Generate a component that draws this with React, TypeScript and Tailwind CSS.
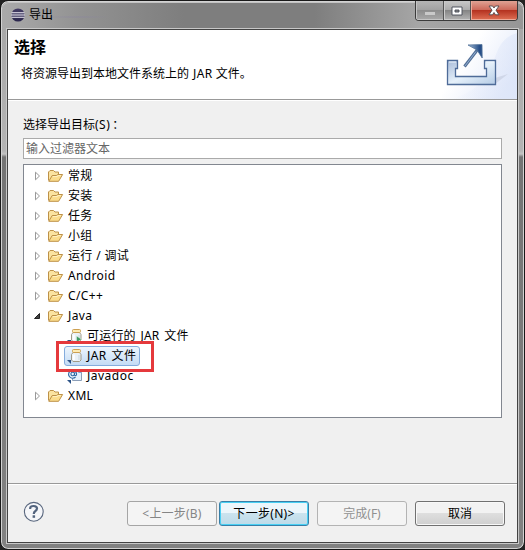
import React from 'react';

function FolderIcon() {
  return (
    <svg className="block shrink-0" width="16" height="14" viewBox="0 0 16 14">
      <path d="M.5 11.5V3L2 1.5H5.5L7 3H10.5V6" fill="#fbe3a0" stroke="#bd9148" />
      <path d="M.8 12.3L4.2 6.5H8.4L9.8 5.5H14.6L10.6 12.3Z" fill="#fbdc8c" stroke="#bd9148" strokeLinejoin="round" />
      <path d="M4.8 7.6H9L10.2 6.6H12.8" fill="none" stroke="#fff1c4" />
    </svg>
  );
}

function JarIcon({ runnable = false }: { runnable?: boolean }) {
  return (
    <svg className="block shrink-0" width="17" height="16" viewBox="0 0 17 16">
      <path d="M6 4.5L4.5 6.5V12L6 13.5H12.5L14 12V6.5L12.5 4.5Z" fill="#eaf1f7" stroke="#a19b87" />
      <path d="M6.8 6.5V12" stroke="#fff" strokeWidth="2" />
      <path d="M12 7V12" stroke="#c9d5df" />
      <rect x="5.5" y="1.5" width="8" height="3" rx="1" fill="#fdebb5" stroke="#cda052" />
      {runnable && <path d="M9.5 8L14.5 11.2L9.5 14.5Z" fill="#3f9a62" stroke="#e3f3e8" strokeWidth=".5" />}
      <path d="M0 12H4V16Z" fill="#2c5387" />
    </svg>
  );
}

function JavadocIcon() {
  return (
    <svg className="block shrink-0" width="17" height="16" viewBox="0 0 17 16">
      <path d="M5.5 1.5H11.5L14.5 4.5V12.5H5.5Z" fill="#e3f0fb" stroke="#8b9eb8" />
      <path d="M11.5 1.5V4.5H14.5" fill="none" stroke="#80a3cd" />
      <circle cx="5.5" cy="6" r="4.6" fill="#eef5fc" />
      <path d="M8.5 9A4 4 0 1 1 9.6 6.2C9.4 8.1 7.4 8.1 7.5 6.5L7.8 4.4M7.5 6A1.8 1.8 0 1 1 7.5 5.8" fill="none" stroke="#2e68a3" strokeWidth="1.1" />
      <path d="M0 12H4V16Z" fill="#2c5387" />
    </svg>
  );
}

function EclipseIcon() {
  return (
    <svg className="mt-px block" width="14" height="14" viewBox="0 0 14 14">
      <defs>
        <linearGradient id="orb" x2="0" y2="1">
          <stop stopColor="#443d65" />
          <stop offset="1" stopColor="#29254c" />
        </linearGradient>
      </defs>
      <circle cx="7" cy="7" r="6.6" fill="url(#orb)" />
      <path d="M.6 4.7H13.4M0 7H14M.6 9.3H13.4" stroke="#f3f1fa" strokeWidth="1.1" />
    </svg>
  );
}

function ExportBanner() {
  return (
    <svg className="block" width="75" height="69" viewBox="0 0 75 69">
      <defs>
        <linearGradient id="sky" x1="0" y1="0" x2="1" y2=".6">
          <stop offset=".4" stopColor="#fff" />
          <stop offset="1" stopColor="#e3eafa" />
        </linearGradient>
        <linearGradient id="tray" x1="0" y1="0" x2="1" y2="1">
          <stop stopColor="#a9bcd9" />
          <stop offset=".5" stopColor="#e5f0fa" />
          <stop offset="1" stopColor="#b4cbe5" />
        </linearGradient>
        <linearGradient id="head" x2="1">
          <stop stopColor="#a5bedb" />
          <stop offset=".8" stopColor="#274f88" />
        </linearGradient>
        <linearGradient id="sweep" x1="0" x2="1">
          <stop stopColor="#dfe7fa" stopOpacity="0" />
          <stop offset="1" stopColor="#d7e1f7" />
        </linearGradient>
      </defs>
      <rect width="75" height="69" fill="url(#sky)" />
      <path d="M10 69C35 61 46 48 52 30S63 7 75 3V69Z" fill="url(#sweep)" opacity=".5" />
      <g transform="translate(-1 0)">
        <path d="M54 48L67 44L54 54Z" fill="#c3c9dc" opacity=".6" />
        <path d="M6.5 30.5H16.5V38.5H14.5V46.5H45.5V38.5H43.5V30.5H54.5V54.5H6.5Z" fill="url(#tray)" stroke="#4e6b98" strokeWidth="1.3" />
        <path d="M8 32H15M45 32H53" stroke="#edf5fd" />
        <path d="M23.5 36.5L37 19" stroke="#526e96" strokeWidth="3" />
        <path d="M24 36L35 21.5" stroke="#91afd0" strokeWidth="1" />
        <path d="M27 15L41 14.5L41.2 28L36 20Z" fill="url(#head)" stroke="#547399" strokeWidth=".8" />
      </g>
    </svg>
  );
}

function Arrow({ open = false }: { open?: boolean }) {
  return (
    <svg className="block shrink-0" width="9" height="10" viewBox="0 0 9 10">
      {open
        ? <path d="M6.5 2.5V7.5H1.5Z" fill="#444" stroke="#222" />
        : <path d="M2.5 1.2V8.8L6.5 5Z" fill="#fff" stroke="#999" />}
    </svg>
  );
}

function Folder({ name, open = false }: { name: string; open?: boolean }) {
  return (
    <div className="flex h-5 items-center pl-[9px]">
      <Arrow open={open} />
      <span className="ml-[6px]"><FolderIcon /></span>
      <span className="ml-1 whitespace-pre tracking-[0.35px]">{name}</span>
    </div>
  );
}

function WindowControls() {
  return (
    <div className="flex h-[20px] w-[103px] overflow-hidden rounded-b-[4px] border border-t-0 border-[#3b3b3b]">
      <div className="flex w-[28px] items-center justify-center border-r border-[#555] bg-[linear-gradient(to_bottom,#b5b5b5,#a0a0a0_50%,#8d8d8d_50%,#a9a9a9)] shadow-[inset_1px_-1px_#c5c5c5]">
        <span className="mt-[5px] h-[3px] w-[10px] bg-[#c9c9c9]" />
      </div>
      <div className="flex w-[27px] items-center justify-center border-r border-[#555] bg-[linear-gradient(to_bottom,#c8c8c8,#aaa_50%,#858585_50%,#b4b4b4)] shadow-[inset_1px_-1px_#ccc]">
        <svg width="12" height="10" viewBox="0 0 12 10">
          <path d="M1 1H11V9H1Z M4 4V6H8V4Z" fill="#fff" fillRule="evenodd" stroke="#454a55" strokeWidth=".9" />
        </svg>
      </div>
      <div className="flex flex-1 items-center justify-center bg-[linear-gradient(to_bottom,#dfa294,#cb6555_50%,#b53321_50%,#df7055)] shadow-[inset_1px_-1px_#eeaa99]">
        <svg width="12" height="11" viewBox="0 0 12 11">
          <path d="M1 1H4.6L6 3L7.4 1H11L8 5.2L11 9.8H7.5L6 7.5L4.5 9.8H1L4 5.2Z" fill="#fff" stroke="#51494d" strokeWidth=".9" />
        </svg>
      </div>
    </div>
  );
}

const buttonBase = 'flex h-[25px] w-[90px] items-center justify-center rounded-[3px] border';

export default function App() {
  return (
    <div className="h-[550px] w-[525px] overflow-hidden bg-[#222] font-['Noto_Sans','Noto_Sans_CJK_SC',sans-serif] text-[12px] leading-[20px] text-black">
      <div className="flex h-[550px] w-[525px] flex-col rounded-[8px] border border-[#191919] bg-[linear-gradient(to_bottom,#a5a5a5_0,#b4b4b4_150px,#c4c4c4_153px,#747474_156px,#828282_100%)] pb-[6px] shadow-[inset_0_0_0_1px_#d2d2d2]">
        <header className="mx-px mt-px flex h-[27px] shrink-0 justify-between rounded-t-[7px] bg-[radial-gradient(ellipse_at_75px_15px,#8983a080,transparent_35px),linear-gradient(to_right,#aaa,#929292_15%,#7e7e7e_35%,#7e7e7e_60%,#a6a6a6_80%,#969696)] shadow-[inset_0_1px_#c4c4c4]">
          <div className="flex pl-[9px] pt-[5px]">
            <EclipseIcon />
            <span className="-mt-[2px] ml-[4px]">导出</span>
          </div>
          <div className="-mt-px mr-[5px]"><WindowControls /></div>
        </header>

        <main className="mx-[6px] flex min-h-0 flex-1 flex-col border border-[#444] bg-[#f0f0f0] shadow-[0_0_0_1px_#c8c8c8]">
          <section className="flex h-[70px] shrink-0 justify-between border-b border-[#999] bg-white">
            <div className="pl-[6px] pt-[7px]">
              <h1 className="text-[16px] font-bold leading-5">选择</h1>
              <p className="ml-[7px] mt-[7px]">将资源导出到本地文件系统上的<span className="ml-1 mr-[3px] tracking-[0.4px]">JAR</span>文件。</p>
            </div>
            <ExportBanner />
          </section>

          <section className="flex min-h-0 flex-1 flex-col border-t border-white pl-[15px] pr-[13px] pt-[14px]">
            <label className="h-[23px]">选择导出目标<span className="tracking-[0.5px]">(S)</span><span className="ml-[2px]">：</span></label>
            <div className="flex h-[21px] w-[479px] items-center border border-[#aaa] bg-white pl-[2px] text-[#666]">输入过滤器文本</div>
            <div className="mt-[5px] h-[254px] w-[479px] border border-[#828790] bg-white pt-px">
              <Folder name="常规" />
              <Folder name="安装" />
              <Folder name="任务" />
              <Folder name="小组" />
              <Folder name="运行 / 调试" />
              <Folder name="Android" />
              <Folder name="C/C++" />
              <Folder name="Java" open />
              <div className="flex h-5 items-center pl-[43px]"><JarIcon runnable /><span className="ml-[3px] tracking-[0.2px] [word-spacing:1.4px]">可运行的 JAR 文件</span></div>
              <div className="relative flex h-5 items-center pl-[40px]">
                <div className="flex h-[20px] w-[76px] items-center rounded-[3px] border border-[#84acdd] bg-linear-to-b from-[#edf5fd] to-[#c4dcf5] pl-[2px]">
                  <JarIcon /><span className="ml-[3px] whitespace-nowrap tracking-[0.4px] [word-spacing:1.4px]">JAR 文件</span>
                </div>
                <div className="absolute -top-[5px] left-[32px] h-[31px] w-[98px] border-[3px] border-[#e5393c]" />
              </div>
              <div className="flex h-5 items-center pl-[43px]"><JavadocIcon /><span className="ml-[3px] tracking-[0.5px]">Javadoc</span></div>
              <Folder name="XML" />
            </div>
          </section>

          <footer className="flex h-[59px] shrink-0 border-t border-[#999] pl-[15px] pt-[17px] shadow-[inset_0_1px_#fff]">
            <svg className="block" width="21" height="21" viewBox="0 0 21 21">
              <circle cx="10.8" cy="10.8" r="9.4" fill="#f5f6f9" stroke="#59677e" strokeWidth="1.1" />
              <path d="M7.2 8V7Q7.3 5 10.6 5Q14 5 14 7.6Q14 9.1 12.2 10.2Q10.8 11.1 10.8 12.9" fill="none" stroke="#53647e" strokeWidth="2.2" />
              <rect x="9.6" y="14.3" width="2.5" height="2.5" fill="#53647e" />
            </svg>
            <div className="ml-[83px] flex">
              <div className={`${buttonBase} border-[#a5a5a5] bg-[#f4f4f4] tracking-[0.2px] text-[#858585]`}>&lt;上一步(B)</div>
              <div className={`${buttonBase} ml-[2px] border-[#397fa7] bg-[linear-gradient(to_bottom,#ecf6fb_50%,#cbe3ee_50%,#bddbe9)] tracking-[0.3px] shadow-[inset_0_0_0_1px_#48d0f4]`}>下一步(N)&gt;</div>
              <div className={`${buttonBase} ml-[8px] border-[#b3b3b3] bg-[#f4f4f4] text-[#909090]`}>完成(F)</div>
              <div className={`${buttonBase} ml-[8px] border-[#707070] bg-[linear-gradient(to_bottom,#f2f2f2_50%,#dedede_50%,#cfcfcf)] shadow-[inset_0_0_0_1px_#f8f8f8]`}>取消</div>
            </div>
          </footer>
        </main>
      </div>
    </div>
  );
}
